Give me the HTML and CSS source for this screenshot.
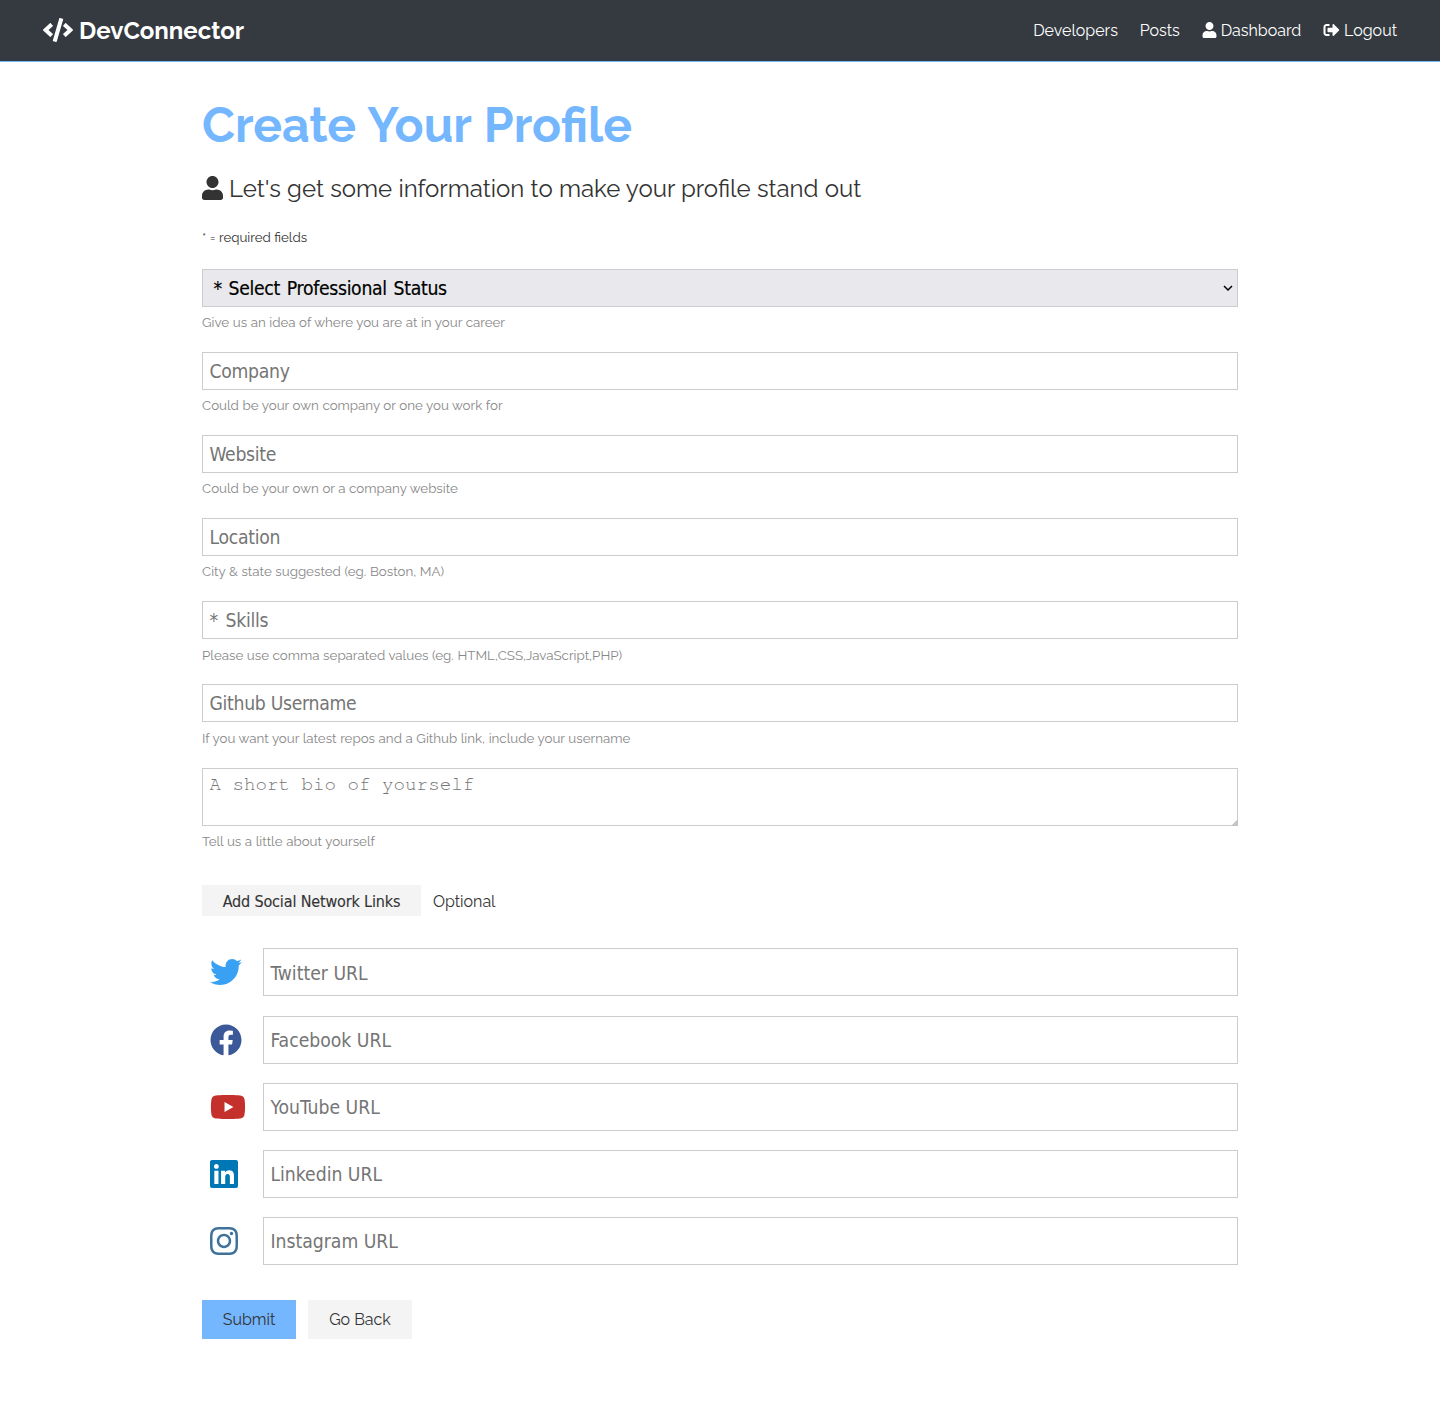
FILE: index.html
```html
<!DOCTYPE html>
<html lang="en">
<head>
<meta charset="utf-8">
<title>DevConnector</title>
<link rel="stylesheet" href="styles.css">
</head>
<body>
<svg class="sprite" aria-hidden="true">
  <symbol id="user" viewBox="0 0 448 512"><path d="M224 256c70.7 0 128-57.3 128-128S294.7 0 224 0 96 57.3 96 128s57.3 128 128 128zm89.6 32h-16.7c-22.2 10.2-46.9 16-72.9 16s-50.6-5.8-72.9-16h-16.7C60.2 288 0 348.2 0 422.4V464c0 26.5 21.5 48 48 48h352c26.5 0 48-21.5 48-48v-41.6c0-74.2-60.2-134.4-134.4-134.4z"/></symbol>
</svg>
<nav class="navbar">
  <a class="brand"><svg class="icon icon-code" viewBox="0 0 640 512"><path d="M278.9 511.5l-61-17.7c-6.4-1.8-10-8.5-8.2-14.9L346.2 8.7c1.8-6.4 8.5-10 14.9-8.2l61 17.7c6.4 1.8 10 8.5 8.2 14.9L293.8 503.3c-1.9 6.4-8.5 10.1-14.9 8.2zm-114-112.2l43.5-46.4c4.6-4.9 4.3-12.7-.8-17.2L117 256l90.6-79.7c5.1-4.5 5.5-12.3.8-17.2l-43.5-46.4c-4.5-4.8-12.1-5.1-17-.5L3.8 247.2c-5.1 4.7-5.1 12.8 0 17.5l144.1 135.1c4.9 4.6 12.5 4.4 17-.5zm327.2.6l144.1-135.1c5.1-4.7 5.1-12.8 0-17.5L492.1 112.1c-4.8-4.5-12.4-4.3-17 .5L431.6 159c-4.6 4.9-4.3 12.7.8 17.2L523 256l-90.6 79.7c-5.1 4.5-5.5 12.3-.8 17.2l43.5 46.4c4.5 4.9 12.1 5.1 17 .6z"/></svg><span class="brand-name">DevConnector</span></a>
  <ul class="links">
    <li>Developers</li>
    <li>Posts</li>
    <li><svg class="icon icon-user"><use href="#user"/></svg>Dashboard</li>
    <li><svg class="icon icon-out" viewBox="0 0 512 512"><path d="M497 273L329 441c-15 15-41 4.5-41-17v-96H152c-13.3 0-24-10.7-24-24v-96c0-13.3 10.7-24 24-24h136V88c0-21.4 25.9-32 41-17l168 168c9.3 9.4 9.3 24.6 0 34zM192 436v-40c0-6.6-5.4-12-12-12H96c-17.7 0-32-14.3-32-32V160c0-17.7 14.3-32 32-32h84c6.6 0 12-5.4 12-12V76c0-6.6-5.4-12-12-12H96c-53 0-96 43-96 96v192c0 53 43 96 96 96h84c6.6 0 12-5.4 12-12z"/></svg>Logout</li>
  </ul>
</nav>
<main class="container">
  <h1 class="title">Create Your Profile</h1>
  <p class="lead"><svg class="icon icon-lead"><use href="#user"/></svg>Let's get some information to make your profile stand out</p>
  <small class="required">* = required fields</small>
  <form class="form">
    <div class="group">
      <div class="control">
        <select class="field select"><option>* Select Professional Status</option></select>
        <svg class="chevron" viewBox="0 0 10 7"><path d="M1 1L5 5L9 1"/></svg>
      </div>
      <small class="hint">Give us an idea of where you are at in your career</small>
    </div>
    <div class="group"><input class="field" placeholder="Company"><small class="hint">Could be your own company or one you work for</small></div>
    <div class="group"><input class="field" placeholder="Website"><small class="hint">Could be your own or a company website</small></div>
    <div class="group"><input class="field" placeholder="Location"><small class="hint">City &amp; state suggested (eg. Boston, MA)</small></div>
    <div class="group"><input class="field starred" placeholder="* Skills"><small class="hint">Please use comma separated values (eg. HTML,CSS,JavaScript,PHP)</small></div>
    <div class="group"><input class="field" placeholder="Github Username"><small class="hint">If you want your latest repos and a Github link, include your username</small></div>
    <div class="group">
      <div class="control">
        <textarea class="field bio" placeholder="A short bio of yourself"></textarea>
        <svg class="grip" viewBox="0 0 7 7"><path d="M7 0V7H0Z"/></svg>
      </div>
      <small class="hint">Tell us a little about yourself</small>
    </div>
    <div class="toggle"><button type="button" class="btn btn-toggle">Add Social Network Links</button><span class="optional">Optional</span></div>
    <div class="social"><svg class="brand-icon twitter" viewBox="0 0 512 512"><path d="M459.37 151.716c.325 4.548.325 9.097.325 13.645 0 138.72-105.583 298.558-298.558 298.558-59.452 0-114.68-17.219-161.137-47.106 8.447.974 16.568 1.299 25.34 1.299 49.055 0 94.213-16.568 130.274-44.832-46.132-.975-84.792-31.188-98.112-72.772 6.498.974 12.995 1.624 19.818 1.624 9.421 0 18.843-1.3 27.614-3.573-48.081-9.747-84.143-51.98-84.143-102.985v-1.299c13.969 7.797 30.214 12.67 47.431 13.319-28.264-18.843-46.781-51.005-46.781-87.391 0-19.492 5.197-37.36 14.294-52.954 51.655 63.675 129.3 105.258 216.365 109.807-1.624-7.797-2.599-15.918-2.599-24.04 0-57.828 46.782-104.934 104.934-104.934 30.213 0 57.502 12.67 76.67 33.137 23.715-4.548 46.456-13.32 66.599-25.34-7.798 24.366-24.366 44.833-46.132 57.827 21.117-2.273 41.584-8.122 60.426-16.243-14.292 20.791-32.161 39.308-52.628 54.253z"/></svg><input class="field" placeholder="Twitter URL"></div>
    <div class="social"><svg class="brand-icon facebook" viewBox="0 0 512 512"><path d="M504 256C504 119 393 8 256 8S8 119 8 256c0 123.78 90.69 226.38 209.25 245V327.69h-63V256h63v-54.64c0-62.15 37-96.48 93.67-96.48 27.14 0 55.52 4.84 55.52 4.84v61h-31.28c-30.8 0-40.41 19.12-40.41 38.73V256h68.78l-11 71.69h-57.78V501C413.31 482.38 504 379.78 504 256z"/></svg><input class="field" placeholder="Facebook URL"></div>
    <div class="social"><svg class="brand-icon youtube" viewBox="0 0 576 512"><path d="M549.655 124.083c-6.281-23.65-24.787-42.276-48.284-48.597C458.781 64 288 64 288 64S117.22 64 74.629 75.486c-23.497 6.322-42.003 24.947-48.284 48.597-11.412 42.867-11.412 132.305-11.412 132.305s0 89.438 11.412 132.305c6.281 23.65 24.787 41.5 48.284 47.821C117.22 448 288 448 288 448s170.78 0 213.371-11.486c23.497-6.321 42.003-24.171 48.284-47.821 11.412-42.867 11.412-132.305 11.412-132.305s0-89.438-11.412-132.305zm-317.51 213.508V175.185l142.739 81.205-142.739 81.201z"/></svg><input class="field" placeholder="YouTube URL"></div>
    <div class="social"><svg class="brand-icon linkedin" viewBox="0 0 448 512"><path d="M416 32H31.9C14.3 32 0 46.5 0 64.3v383.4C0 465.5 14.3 480 31.9 480H416c17.6 0 32-14.5 32-32.3V64.3c0-17.8-14.4-32.3-32-32.3zM135.4 416H69V202.2h66.5V416zm-33.2-243c-21.3 0-38.5-17.3-38.5-38.5S80.9 96 102.2 96c21.2 0 38.5 17.3 38.5 38.5 0 21.3-17.2 38.5-38.5 38.5zm282.1 243h-66.4V312c0-24.8-.5-56.7-34.5-56.7-34.6 0-39.9 27-39.9 54.9V416h-66.4V202.2h63.7v29.2h.9c8.9-16.8 30.6-34.5 62.9-34.5 67.2 0 79.7 44.3 79.7 101.9V416z"/></svg><input class="field" placeholder="Linkedin URL"></div>
    <div class="social"><svg class="brand-icon instagram" viewBox="0 0 448 512"><path d="M224.1 141c-63.6 0-114.9 51.3-114.9 114.9s51.3 114.9 114.9 114.9S339 319.5 339 255.9 287.7 141 224.1 141zm0 189.6c-41.1 0-74.7-33.5-74.7-74.7s33.5-74.7 74.7-74.7 74.7 33.5 74.7 74.7-33.6 74.7-74.7 74.7zm146.4-194.3c0 14.9-12 26.8-26.8 26.8-14.9 0-26.8-12-26.8-26.8s12-26.8 26.8-26.8 26.8 12 26.8 26.8zm76.1 27.2c-1.7-35.9-9.9-67.7-36.2-93.9-26.2-26.2-58-34.4-93.9-36.2-37-2.1-147.9-2.1-184.9 0-35.8 1.7-67.6 9.9-93.9 36.1s-34.4 58-36.2 93.9c-2.1 37-2.1 147.9 0 184.9 1.7 35.9 9.9 67.7 36.2 93.9s58 34.4 93.9 36.2c37 2.1 147.9 2.1 184.9 0 35.9-1.7 67.7-9.9 93.9-36.2 26.2-26.2 34.4-58 36.2-93.9 2.1-37 2.1-147.8 0-184.8zM398.8 388c-7.8 19.6-22.9 34.7-42.6 42.6-29.5 11.7-99.5 9-132.1 9s-102.7 2.6-132.1-9c-19.6-7.8-34.7-22.9-42.6-42.6-11.7-29.5-9-99.5-9-132.1s-2.6-102.7 9-132.1c7.8-19.6 22.9-34.7 42.6-42.6 29.5-11.7 99.5-9 132.1-9s102.7-2.6 132.1 9c19.6 7.8 34.7 22.9 42.6 42.6 11.7 29.5 9 99.5 9 132.1s2.7 102.7-9 132.1z"/></svg><input class="field" placeholder="Instagram URL"></div>
    <div class="actions"><button type="button" class="btn btn-primary">Submit</button><a class="btn btn-light">Go Back</a></div>
  </form>
</main>
</body>
</html>
```
FILE: styles.css
```css
* { box-sizing: border-box; margin: 0; padding: 0; }
body { font-family: Raleway, Lato, sans-serif; font-size: 16px; line-height: 1.6; color: #333; background: #fff; }
.sprite { display: none; }
.icon { fill: currentColor; flex: none; }
.navbar { display: flex; justify-content: space-between; align-items: center; height: 62px; padding: 0 43px; background: #343a40; border-bottom: 1px solid #74b7ff; color: #fff; }
.brand { display: flex; align-items: center; gap: 6px; font-size: 24px; font-weight: 700; }
.brand-name { padding-top: 2px; }
.icon-code { width: 30px; height: 24px; }
.links { display: flex; gap: 21.8px; list-style: none; }
.links li { display: flex; align-items: center; gap: 4px; }
.icon-user { width: 15px; height: 16px; margin-bottom: 1px; }
.icon-out { width: 17px; height: 16px; margin-bottom: 1px; }
.container { width: 1036px; margin: 34px auto 0; }
.title { font-size: 48px; line-height: 58px; color: #74b7ff; word-spacing: 1.4px; }
.lead { display: flex; align-items: center; gap: 6px; font-size: 24px; line-height: 38px; margin-top: 16px; word-spacing: 0.12px; }
.icon-lead { width: 21px; height: 24px; margin-bottom: 2px; }
.required { display: block; font-size: 13.33px; line-height: 20px; margin-top: 19px; }
.form { margin-top: 22px; }
.group { margin-bottom: 19.92px; }
.control { position: relative; }
.field { display: block; width: 100%; height: 38px; padding: 6.4px; border: 1px solid #ccc; font-family: Tahoma, "DejaVu Sans Condensed", sans-serif; font-size: 19.2px; letter-spacing: -0.28px; background: #fff; }
.field::placeholder { color: #757575; opacity: 1; }
.starred { word-spacing: 2.6px; }
.select { appearance: none; padding: 0 10.4px; border-radius: 0; background: #e9e9ed; color: #000; letter-spacing: -0.3px; word-spacing: 1.6px; -webkit-text-stroke: 0.2px #000; }
.chevron { position: absolute; right: 5px; top: 16px; width: 10px; height: 7px; fill: none; stroke: #000; stroke-width: 1.5; }
.bio { height: 58px; resize: none; letter-spacing: 0; font-family: "Courier 10 Pitch", FreeMono, "Nimbus Mono PS", "Courier New", "Liberation Mono", monospace; }
.grip { position: absolute; right: 0; bottom: 0; width: 7px; height: 7px; fill: #c4c4c4; }
.hint { display: block; margin-top: 5.2px; font-size: 13.33px; line-height: 20px; color: #888; word-spacing: 0.18px; }
.toggle { display: flex; align-items: center; gap: 12px; margin: 34.2px 0 32.5px; }
.optional { padding-top: 3px; }
.btn { display: flex; align-items: center; justify-content: center; border: 0; color: #333; background: #f4f4f4; font: inherit; }
.btn-toggle { width: 219px; height: 31px; padding-top: 3px; font-family: Tahoma, "DejaVu Sans Condensed", sans-serif; letter-spacing: -0.15px; -webkit-text-stroke: 0.1px #333; }
.social { display: flex; align-items: center; margin-bottom: 19.2px; }
.social .field { width: 975px; height: 48px; margin-left: auto; padding-top: 8px; letter-spacing: 0; }
.brand-icon { height: 32px; margin-left: 8px; fill: currentColor; }
.twitter { color: #38a1f3; }
.facebook { color: #3b5998; }
.youtube { color: #c4302b; }
.linkedin { color: #0077b5; }
.instagram { color: #3f729b; }
.actions { display: flex; gap: 12px; margin-top: 35px; }
.btn-primary { width: 94px; height: 39px; background: #74b7ff; }
.btn-light { width: 104px; height: 39px; }
```
